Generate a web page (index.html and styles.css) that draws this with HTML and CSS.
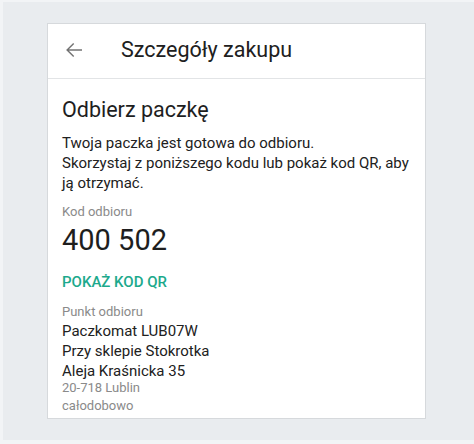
FILE: index.html
```html
<!DOCTYPE html>
<html lang="pl">
<head>
<meta charset="utf-8">
<link rel="stylesheet" href="styles.css">
</head>
<body>
<div class="page">
  <div class="card">
    <div class="header">
      <svg class="back" width="24" height="24" viewBox="0 0 24 24"><path d="M20 11.2H6.9l5.3-5.3L11.2 4.9 4.1 12l7.1 7.1 1-1-5.3-5.3H20z" fill="#737373"/></svg>
      <div class="title">Szczegóły zakupu</div>
    </div>
    <div class="content">
      <h1 class="heading">Odbierz paczkę</h1>
      <p class="desc">Twoja paczka jest gotowa do odbioru.<br>Skorzystaj z poniższego kodu lub pokaż kod QR, aby ją otrzymać.</p>
      <div class="label">Kod odbioru</div>
      <div class="code">400 502</div>
      <div class="action">POKAŻ KOD QR</div>
      <div class="label point">Punkt odbioru</div>
      <div class="line">Paczkomat LUB07W</div>
      <div class="line">Przy sklepie Stokrotka</div>
      <div class="line">Aleja Kraśnicka 35</div>
      <div class="muted first">20-718 Lublin</div>
      <div class="muted">całodobowo</div>
    </div>
  </div>
</div>
</body>
</html>
```
FILE: styles.css
```css
html, body {
  margin: 0;
  padding: 0;
}
body {
  background: #f2f4f6;
  font-family: Roboto, "Noto Sans", sans-serif;
  width: 474px;
  height: 444px;
  overflow: hidden;
}
.page {
  margin: 2px 0 0 3px;
  height: 438px;
  background: #e9ecef;
  padding: 21px 0 0 44px;
  box-sizing: border-box;
}
.card {
  background: #fff;
  border: 1px solid #d6d9dc;
  width: 379px;
  height: 396px;
  box-sizing: border-box;
  overflow: hidden;
}
.header {
  height: 55px;
  padding-bottom: 3px;
  box-sizing: border-box;
  border-bottom: 1px solid #e2e4e6;
  display: flex;
  align-items: center;
}
.back {
  margin-left: 14px;
  width: 24px;
  height: 24px;
  flex: none;
}
.title {
  margin-left: 35px;
  font-size: 21.5px;
  color: #202020;
}
.content {
  padding: 17px 14px 0 14px;
}
.heading {
  margin: 0;
  font-size: 21.5px;
  font-weight: 400;
  color: #1e1e1e;
  line-height: 28px;
}
.desc {
  margin: 9px 0 0 0;
  font-size: 15px;
  line-height: 20px;
  color: #212121;
}
.label {
  margin-top: 10px;
  font-size: 13px;
  line-height: 18px;
  color: #8a8a8a;
}
.code {
  margin-top: 2px;
  font-size: 29px;
  line-height: 34px;
  color: #1e1e1e;
}
.action {
  margin-top: 15px;
  font-size: 15px;
  font-weight: 500;
  color: #1ca98c;
  line-height: 20px;
}
.label.point {
  margin-top: 11px;
}
.line {
  font-size: 15px;
  line-height: 20px;
  color: #212121;
}
.muted {
  font-size: 13px;
  line-height: 18px;
  color: #8a8a8a;
}
.muted.first {
  margin-top: -2px;
}
```
